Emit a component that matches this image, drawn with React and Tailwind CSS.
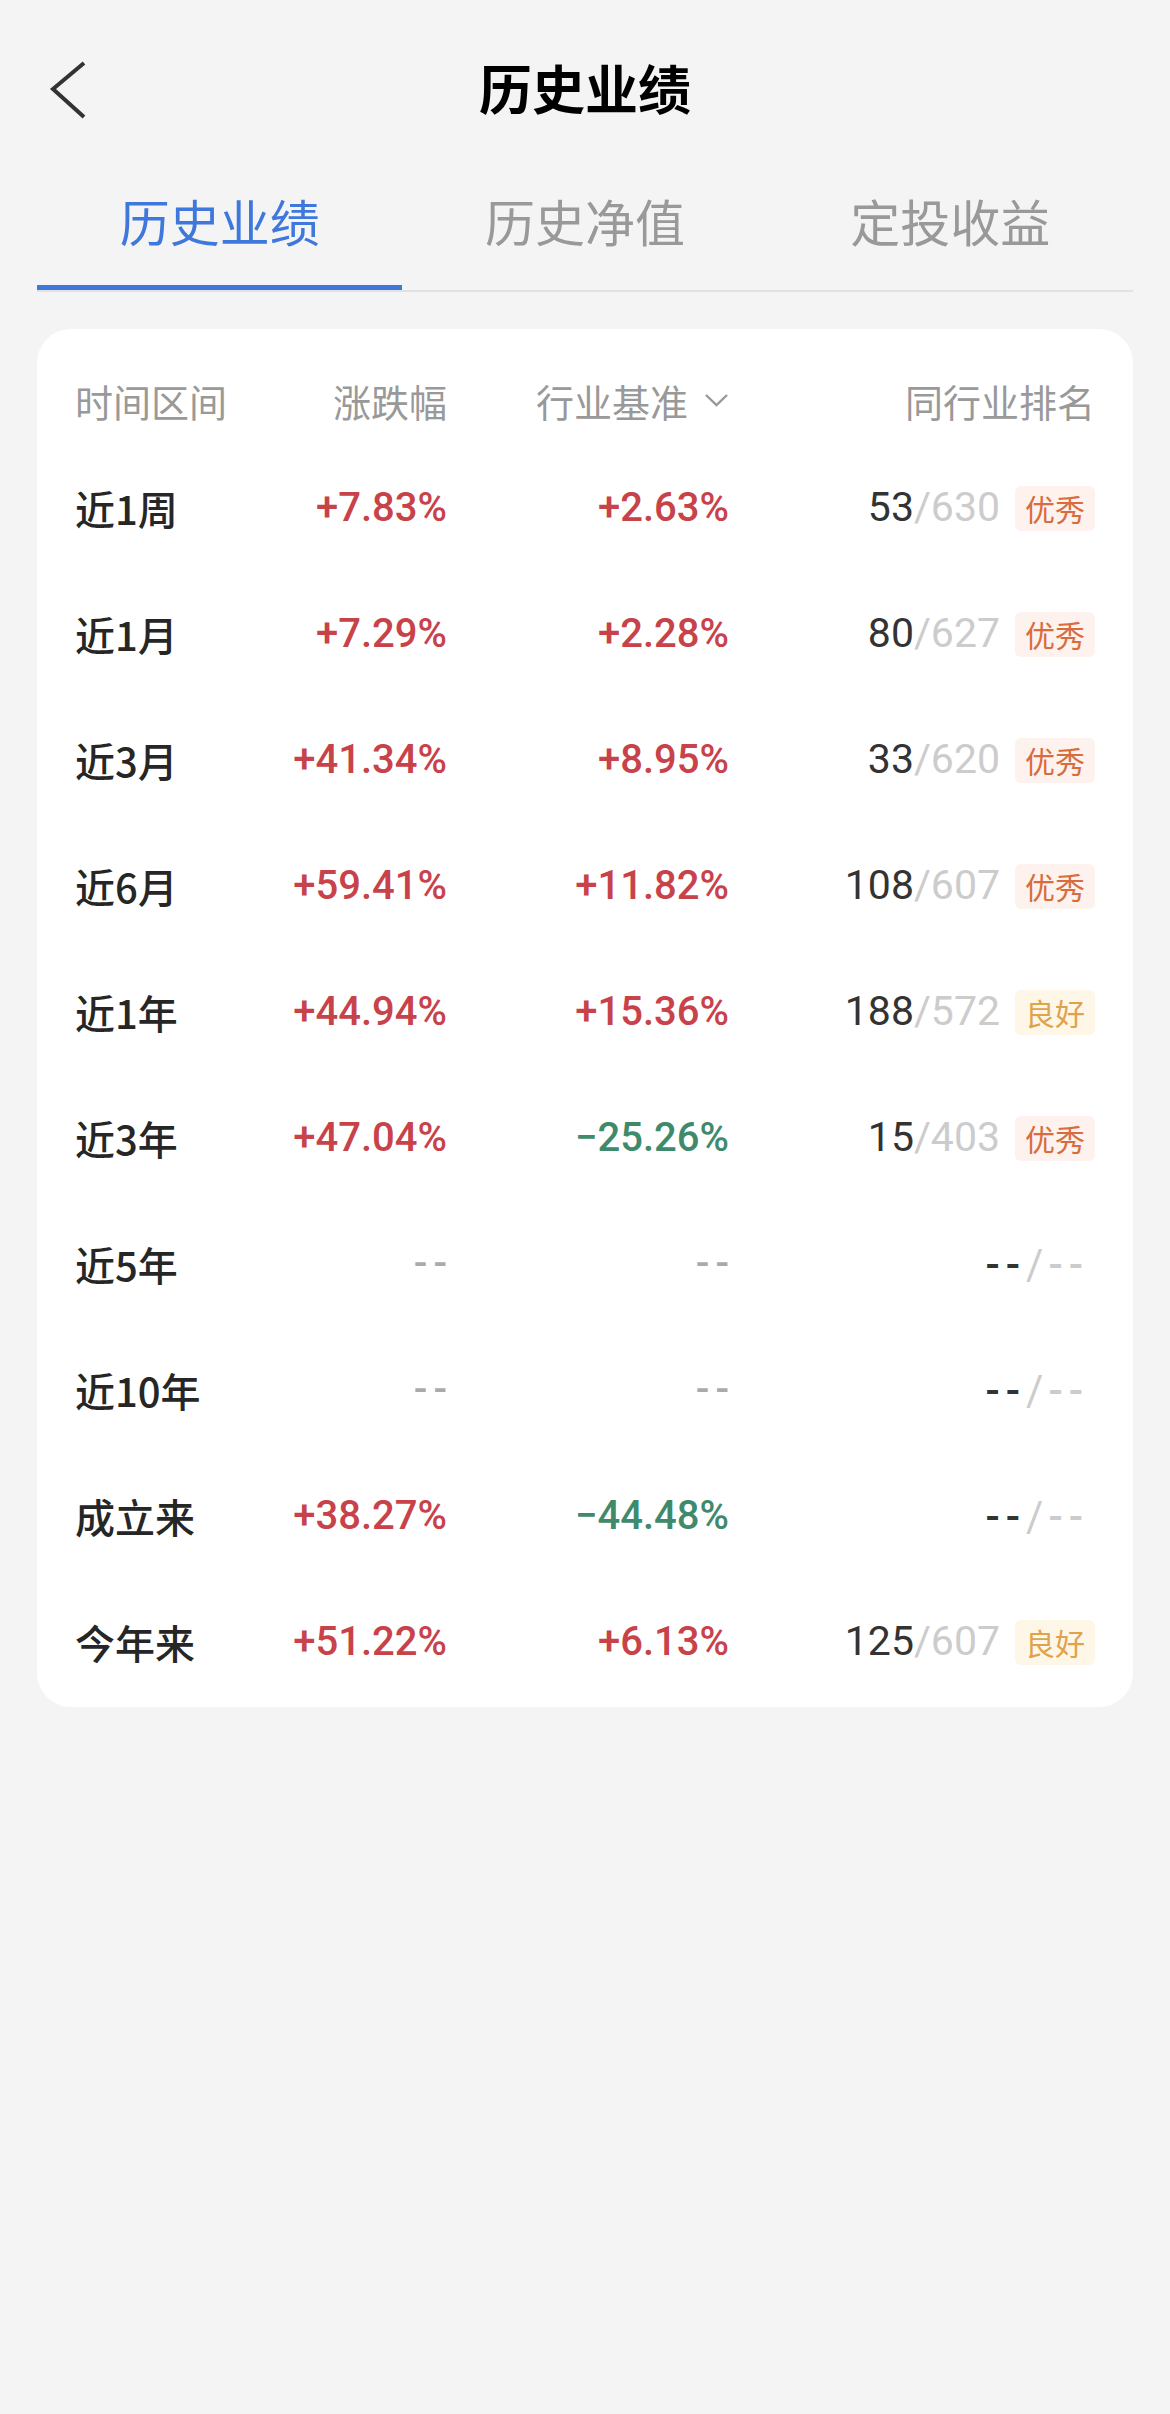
import { useState } from "react"

const rows = [
  { label: "近1周", change: "+7.83%", bench: "+2.63%", rank: "53", total: "630", tag: "优秀" },
  { label: "近1月", change: "+7.29%", bench: "+2.28%", rank: "80", total: "627", tag: "优秀" },
  { label: "近3月", change: "+41.34%", bench: "+8.95%", rank: "33", total: "620", tag: "优秀" },
  { label: "近6月", change: "+59.41%", bench: "+11.82%", rank: "108", total: "607", tag: "优秀" },
  { label: "近1年", change: "+44.94%", bench: "+15.36%", rank: "188", total: "572", tag: "良好" },
  { label: "近3年", change: "+47.04%", bench: "−25.26%", rank: "15", total: "403", tag: "优秀" },
  { label: "近5年", change: null, bench: null, rank: null },
  { label: "近10年", change: null, bench: null, rank: null },
  { label: "成立来", change: "+38.27%", bench: "−44.48%", rank: null },
  { label: "今年来", change: "+51.22%", bench: "+6.13%", rank: "125", total: "607", tag: "良好" },
]

const tabs = ["历史业绩", "历史净值", "定投收益"]

function Value({ value }) {
  if (!value) {
    return <span className="font-['Roboto',sans-serif] text-[40px] font-medium tracking-[6px] -mr-[6px] text-[#aaaaaa]">--</span>
  }
  const negative = value.startsWith("−")
  return (
    <span
      className={
        "font-['Roboto',sans-serif] text-[40px] font-medium " +
        (negative ? "text-[#3f8a6c]" : "text-[#c8424a]")
      }
    >
      {value}
    </span>
  )
}

function Rank({ row }) {
  if (!row.rank) {
    return (
      <div className="flex items-center pr-[12px] font-['Roboto',sans-serif] text-[42px]">
        <span className="tracking-[6px] text-[#333333] font-medium">--</span>
        <span className="text-[#cccccc] mr-[5px]">/</span>
        <span className="tracking-[6px] -mr-[6px] text-[#cccccc] font-medium">--</span>
      </div>
    )
  }
  const good = row.tag === "良好"
  return (
    <div className="flex items-center gap-[15px]">
      <div className="font-['Roboto',sans-serif] text-[41px]">
        <span className="text-[#333333]">{row.rank}</span>
        <span className="text-[#cccccc]">/{row.total}</span>
      </div>
      <div
        className={
          "w-[80px] h-[45px] rounded-[6px] flex items-center justify-center text-[30px] " +
          (good ? "bg-[#fef7e8] text-[#e0a24a]" : "bg-[#fdf2ed] text-[#d96c3c]")
        }
      >
        {row.tag}
      </div>
    </div>
  )
}

export default function App() {
  const [active, setActive] = useState(0)

  return (
    <div className="min-h-[2414px] bg-[#f4f4f4] font-['Noto_Sans_CJK_SC',sans-serif]">
      <div className="h-[180px] pb-[6px] grid grid-cols-[1fr_auto_1fr] items-center">
        <div className="pl-[48px] pt-[6px] flex items-center">
          <svg width="44" height="62" viewBox="0 0 44 62" fill="none">
            <polyline points="36,4 5,30 36,58" stroke="#333333" strokeWidth="4" strokeLinecap="butt" strokeLinejoin="miter" />
          </svg>
        </div>
        <div className="text-[53px] font-bold text-black leading-none">历史业绩</div>
        <div />
      </div>

      <div className="mx-[37px] flex border-b-2 border-[#e2e2e2]">
        {tabs.map((tab, index) => (
          <button key={tab} onClick={() => setActive(index)} className="flex-1 flex flex-col items-stretch pt-[14px]">
            <div
              className={
                "text-[50px] leading-[52px] text-center mb-[39px] " +
                (active === index ? "text-[#3f78dc]" : "text-[#999999]")
              }
            >
              {tab}
            </div>
            <div className={"h-[5px] " + (active === index ? "bg-[#3f78dc]" : "bg-transparent")} />
          </button>
        ))}
      </div>

      <div className="mx-[37px] mt-[37px] bg-white rounded-[34px] pt-[26px] pb-[2px] px-[38px]">
        <div className="h-[90px] grid grid-cols-[200px_172px_282px_1fr] items-center text-[38px] text-[#999999]">
          <div>时间区间</div>
          <div className="text-right">涨跌幅</div>
          <div className="flex items-center justify-end gap-[16px]">
            <span>行业基准</span>
            <svg width="25" height="16" viewBox="0 0 25 16" fill="none">
              <polyline points="2,3 12.5,13 23,3" stroke="#999999" strokeWidth="2.4" />
            </svg>
          </div>
          <div className="text-right">同行业排名</div>
        </div>

        {rows.map((row) => (
          <div key={row.label} className="h-[126px] grid grid-cols-[200px_172px_282px_1fr] items-center">
            <div className="text-[40px] font-medium text-[#262626]">{row.label}</div>
            <div className="text-right">
              <Value value={row.change} />
            </div>
            <div className="text-right">
              <Value value={row.bench} />
            </div>
            <div className="flex justify-end">
              <Rank row={row} />
            </div>
          </div>
        ))}
      </div>
    </div>
  )
}
